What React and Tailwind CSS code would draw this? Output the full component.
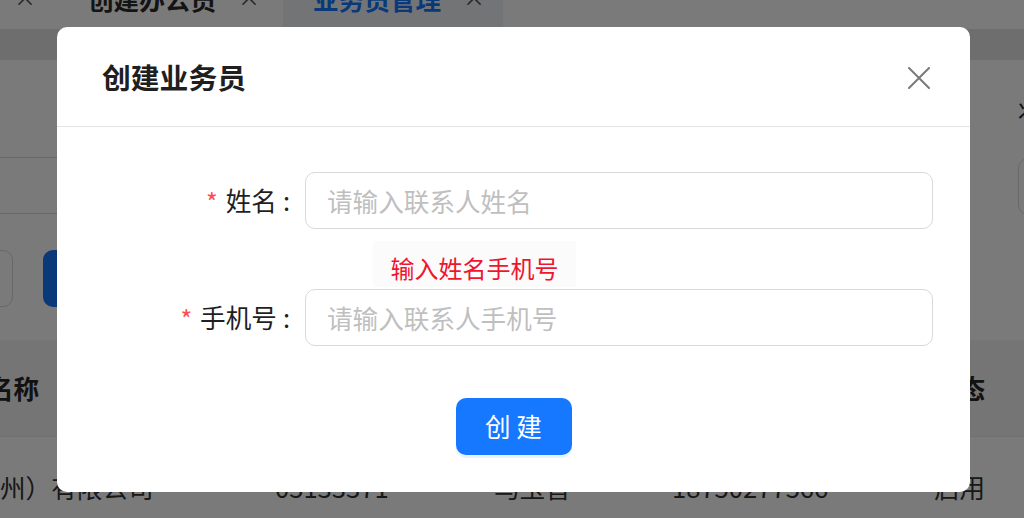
import React from "react";

const FONT = { fontFamily: '"Noto Sans CJK SC", "Noto Sans", sans-serif' };

function Background() {
  return (
    <div className="h-[518px] w-[1024px] overflow-hidden bg-[#e7e7e7] text-[25.6px] text-[#262626]">
      {/* tab bar */}
      <div className="flex h-[29px] items-start overflow-hidden bg-white">
        <div className="flex h-[29px] w-[283px] shrink-0 items-start">
          <span className="-mt-[20px] ml-[14px] text-[22px] text-[#555]">×</span>
          <span className="-mt-[20px] ml-[52px] font-semibold text-[#2a2a2a]">创建办公员</span>
          <span className="-mt-[20px] ml-[22px] text-[22px] text-[#555]">×</span>
        </div>
        <div className="flex h-[29px] w-[220px] shrink-0 items-start bg-[#f1f3f6]">
          <span className="-mt-[20px] ml-[30px] font-semibold text-[#1677ff]">业务员管理</span>
          <span className="-mt-[20px] ml-[22px] text-[22px] text-[#555]">×</span>
        </div>
      </div>
      <div className="h-[31px]" />
      {/* content card */}
      <div className="bg-white">
        {/* filter form */}
        <div className="flex h-[190px]">
          <div className="-ml-[10px] w-[1028px] shrink-0 pt-[97px]">
            <div className="h-[57px] w-[560px] rounded-[10px] border border-[#d9d9d9]" />
          </div>
          <div className="w-[300px] shrink-0">
            <div className="mt-[36px] leading-[30px]">状态</div>
            <div className="mt-[32px] h-[57px] w-[260px] rounded-[10px] border border-[#d9d9d9]" />
          </div>
        </div>
        <div className="flex h-[90px] items-start">
          <div className="-ml-[80px] h-[57px] w-[93px] shrink-0 rounded-[10px] border border-[#d9d9d9]" />
          <div className="ml-[30px] h-[57px] w-[140px] shrink-0 rounded-[10px] bg-[#1677ff]" />
        </div>
        {/* table header */}
        <div className="flex h-[97px] items-center border-b border-[#ebebeb] bg-[#f4f4f4] font-semibold">
          <div className="-ml-[12px] w-[946px] shrink-0">名称</div>
          <div className="shrink-0">状态</div>
        </div>
        {/* row */}
        <div className="flex h-[100px] items-center text-[#333]">
          <div className="w-[275px] shrink-0">州）有限公司</div>
          <div className="w-[219px] shrink-0">05133371</div>
          <div className="w-[178px] shrink-0">马玉普</div>
          <div className="w-[262px] shrink-0">18750277566</div>
          <div className="shrink-0">启用</div>
        </div>
      </div>
    </div>
  );
}

function Field({ label, placeholder }) {
  return (
    <div className="flex h-[57px] items-center">
      <div className="flex w-[248px] shrink-0 items-center justify-end pr-[15px] text-[25.6px] text-[#1f1f1f]">
        <span className="mr-[8px] mt-[2px] text-[25px] leading-none text-[#ff4d4f]">*</span>
        <span>{label}</span>
        <span className="ml-[6px]">:</span>
      </div>
      <input
        className="h-[57px] w-[628px] rounded-[10px] border border-[#d9d9d9] bg-white pl-[21px] text-[25.6px] text-[#1f1f1f] outline-none placeholder:text-[#bfbfbf]"
        placeholder={placeholder}
      />
    </div>
  );
}

export default function App() {
  return (
    <div className="relative h-[518px] w-[1024px] overflow-hidden" style={FONT}>
      <Background />
      <div className="absolute inset-0 bg-black/[0.52]" />
      <div className="absolute inset-0 flex justify-center pl-[3px] pt-[27px]">
        <div className="h-[465px] w-[913px] rounded-[10px] bg-white">
          <div className="flex h-[100px] items-center justify-between border-b border-[#e5e5e5] pl-[45px] pr-[40px]">
            <div className="text-[28.8px] font-semibold text-[#1f1f1f]">创建业务员</div>
            <svg width="22" height="22" viewBox="0 0 22 22" className="mt-[2px]">
              <path d="M1 1 L21 21 M21 1 L1 21" stroke="#7a7a7a" strokeWidth="2" strokeLinecap="round" />
            </svg>
          </div>
          <div className="pt-[45px]">
            <Field label="姓名" placeholder="请输入联系人姓名" />
            <div className="h-[60px] pt-[12px]">
              <div className="ml-[316px] flex h-[46px] w-[203px] items-center justify-center bg-[#fbfbfb] pt-[7px] text-[24px] text-[#f0142f]">
                输入姓名手机号
              </div>
            </div>
            <Field label="手机号" placeholder="请输入联系人手机号" />
            <div className="flex justify-center pt-[52px]">
              <button className="h-[57px] w-[116px] rounded-[10px] bg-[#1677ff] text-[25.6px] text-white shadow-[0_3px_0_rgba(5,145,255,0.1)]">
                创 建
              </button>
            </div>
          </div>
        </div>
      </div>
    </div>
  );
}
